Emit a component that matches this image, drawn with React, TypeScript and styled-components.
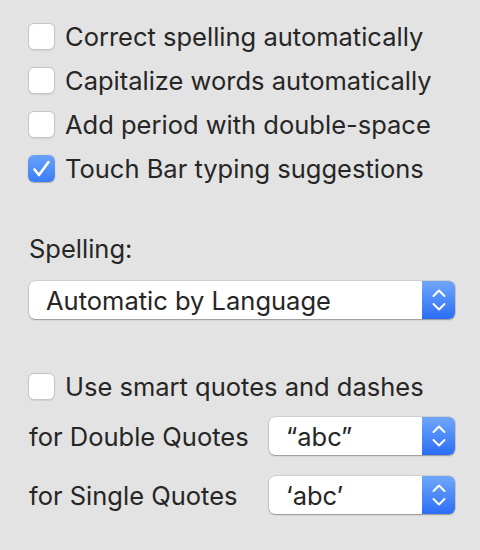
import React from "react";
import styled, { createGlobalStyle } from "styled-components";

const Global = createGlobalStyle`
  html, body { margin: 0; padding: 0; background: #e3e3e3; }
  body { font-family: Inter, "Noto Sans", sans-serif; color: #262626; -webkit-font-smoothing: antialiased; }
`;

const FS = "25.5px";

const Panel = styled.div`
  width: 480px;
  height: 550px;
  box-sizing: border-box;
  padding: 14px 25px 0 28px;
  background: #e3e3e3;
  display: flex;
  flex-direction: column;
`;

const CheckRow = styled.label<{ $mt?: number }>`
  height: 44px;
  display: flex;
  align-items: center;
  gap: 10px;
  font-size: ${FS};
  margin-top: ${(p) => p.$mt ?? 0}px;
`;

const Box = styled.span<{ $on?: boolean }>`
  width: 27px;
  height: 27px;
  box-sizing: border-box;
  border-radius: 6px;
  flex: none;
  display: flex;
  align-items: center;
  justify-content: center;
  background: ${(p) => (p.$on ? "linear-gradient(#6aa2f9, #3a7cf6)" : "#ffffff")};
  border: ${(p) => (p.$on ? "none" : "1px solid #c6c6c6")};
  box-shadow: ${(p) => (p.$on ? "0 0.5px 1px rgba(0,0,0,0.25)" : "0 0.5px 1px rgba(0,0,0,0.08)")};
`;

const Label = styled.div`
  font-size: ${FS};
  line-height: 32px;
  margin: 43px 0 0 1px;
`;

const Popup = styled.div<{ $w?: number; $mt?: number }>`
  height: 38px;
  width: ${(p) => (p.$w ? `${p.$w}px` : "auto")};
  margin-top: ${(p) => p.$mt ?? 0}px;
  margin-left: 1px;
  display: flex;
  background: #ffffff;
  border-radius: 6px;
  box-shadow: 0 0 0 0.5px rgba(0, 0, 0, 0.18), 0 1px 1.5px rgba(0, 0, 0, 0.28);
  overflow: hidden;
  flex: none;
`;

const PopupText = styled.div<{ $pl: number }>`
  flex: 1;
  display: flex;
  align-items: center;
  padding-left: ${(p) => p.$pl}px;
  font-size: ${FS};
`;

const Stepper = styled.div`
  width: 33px;
  flex: none;
  display: flex;
  align-items: center;
  justify-content: center;
  background: linear-gradient(#70a7fa, #2b6ef6);
`;

const QuoteRow = styled.div<{ $mt: number }>`
  height: 40px;
  display: flex;
  align-items: center;
  justify-content: space-between;
  margin-top: ${(p) => p.$mt}px;
  font-size: ${FS};
`;

const QuoteLabel = styled.span`
  margin-left: 1px;
`;

const Chevrons = () => (
  <svg width="14" height="22" viewBox="0 0 14 22" fill="none">
    <path d="M1.5 7 L7 1.5 L12.5 7" stroke="#fff" strokeWidth="2" strokeLinecap="round" strokeLinejoin="round" />
    <path d="M1.5 15 L7 20.5 L12.5 15" stroke="#fff" strokeWidth="2" strokeLinecap="round" strokeLinejoin="round" />
  </svg>
);

const Check = () => (
  <svg width="27" height="27" viewBox="0 0 27 27" fill="none">
    <path d="M6.5 14.5 L11 20 L20.5 7" stroke="#fff" strokeWidth="2.6" strokeLinecap="round" strokeLinejoin="round" />
  </svg>
);

const CheckItem = ({ text, on, mt }: { text: string; on?: boolean; mt?: number }) => (
  <CheckRow $mt={mt}>
    <Box $on={on}>{on && <Check />}</Box>
    <span>{text}</span>
  </CheckRow>
);

export default function App() {
  return (
    <>
      <Global />
      <Panel>
        <CheckItem text="Correct spelling automatically" />
        <CheckItem text="Capitalize words automatically" />
        <CheckItem text="Add period with double-space" />
        <CheckItem text="Touch Bar typing suggestions" on />
        <Label>Spelling:</Label>
        <Popup $mt={16}>
          <PopupText $pl={17}>Automatic by Language</PopupText>
          <Stepper>
            <Chevrons />
          </Stepper>
        </Popup>
        <CheckItem text="Use smart quotes and dashes" mt={45} />
        <QuoteRow $mt={8}>
          <QuoteLabel>for Double Quotes</QuoteLabel>
          <Popup $w={186}>
            <PopupText $pl={17}>“abc”</PopupText>
            <Stepper>
              <Chevrons />
            </Stepper>
          </Popup>
        </QuoteRow>
        <QuoteRow $mt={19}>
          <QuoteLabel>for Single Quotes</QuoteLabel>
          <Popup $w={186}>
            <PopupText $pl={17}>‘abc’</PopupText>
            <Stepper>
              <Chevrons />
            </Stepper>
          </Popup>
        </QuoteRow>
      </Panel>
    </>
  );
}
